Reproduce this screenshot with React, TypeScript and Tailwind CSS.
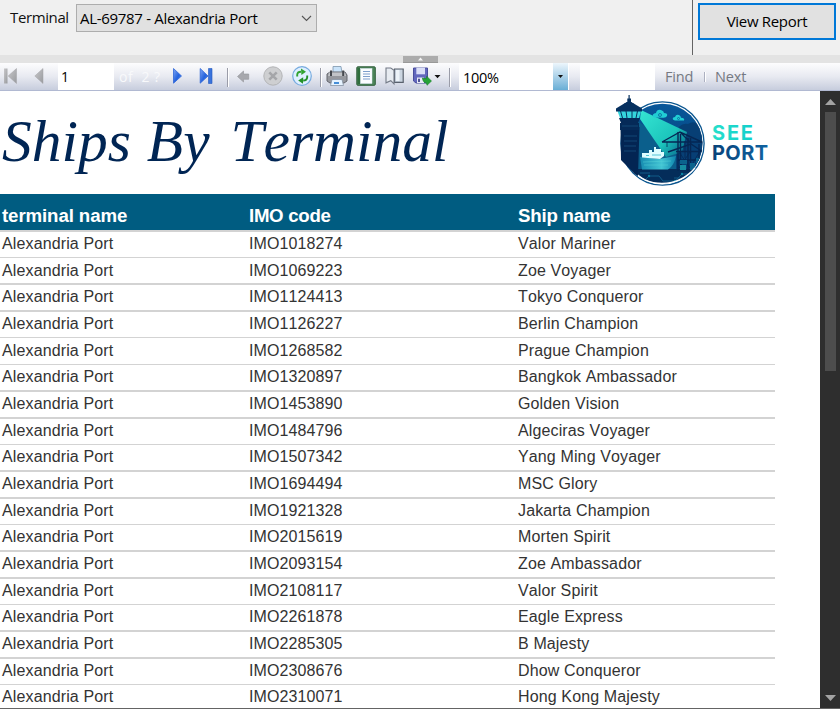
import React from "react";

type Ship = [code: string, name: string, rowClass: string];

const ships: Ship[] = [
  ["IMO1018274", "Valor Mariner", "h-[27px] border-t-2 pt-px"],
  ["IMO1069223", "Zoe Voyager", "h-[26px] border-t pt-[2px]"],
  ["IMO1124413", "Tokyo Conqueror", "h-[27px] border-t-2 pt-px"],
  ["IMO1126227", "Berlin Champion", "h-[27px] border-t-2 pt-px"],
  ["IMO1268582", "Prague Champion", "h-[27px] border-t pt-[2px]"],
  ["IMO1320897", "Bangkok Ambassador", "h-[26px] border-t pt-px"],
  ["IMO1453890", "Golden Vision", "h-[27px] border-t-2 pt-px"],
  ["IMO1484796", "Algeciras Voyager", "h-[27px] border-t-2 pt-px"],
  ["IMO1507342", "Yang Ming Voyager", "h-[26px] border-t pt-px"],
  ["IMO1694494", "MSC Glory", "h-[27px] border-t-2 pt-px"],
  ["IMO1921328", "Jakarta Champion", "h-[27px] border-t-2 pt-px"],
  ["IMO2015619", "Morten Spirit", "h-[26px] border-t pt-px"],
  ["IMO2093154", "Zoe Ambassador", "h-[27px] border-t-2 pt-px"],
  ["IMO2108117", "Valor Spirit", "h-[27px] border-t-2 pt-px"],
  ["IMO2261878", "Eagle Express", "h-[26px] border-t pt-px"],
  ["IMO2285305", "B Majesty", "h-[27px] border-t-2 pt-px"],
  ["IMO2308676", "Dhow Conqueror", "h-[27px] border-t-2 pt-px"],
  ["IMO2310071", "Hong Kong Majesty", "h-[24px] border-t pt-px"],
];

const ui = "font-['Open_Sans','Noto_Sans',sans-serif] whitespace-nowrap";

function Separator() {
  return <div className="mt-[5px] h-[19px] w-[2px] shrink-0 border-l border-[#9a9ca8] bg-white" />;
}

function Parameters() {
  return (
    <header className="flex h-[55px] bg-[#f0f0f0]">
      <div className="flex w-[692px] items-start pl-[10px]">
        <label className={`${ui} mt-[6px] w-[66px] text-[15px] leading-[22px] tracking-[-0.38px] text-[#111]`}>
          Terminal
        </label>
        <div className="mt-[4px] flex h-[28px] w-[241px] items-center justify-between border border-[#adadad] bg-[#e1e1e1] pr-[4px] pl-[3px]">
          <span className={`${ui} text-[15px] leading-[22px] tracking-[-0.31px] text-black`}>AL-69787 - Alexandria Port</span>
          <svg width="11" height="7" viewBox="0 0 11 7" fill="none">
            <path d="M1 1L5.5 5.5L10 1" stroke="#555" strokeWidth="1.1" />
          </svg>
        </div>
      </div>
      <div className="flex flex-1 border-l border-[#646464] pt-[3px] pl-[5px]">
        <button className={`${ui} h-[37px] w-[138px] border-2 border-[#0078d7] bg-[#e1e1e1] pb-[2px] text-[15px] leading-[22px] tracking-[-0.32px] text-black`}>
          View Report
        </button>
      </div>
    </header>
  );
}

function Splitter() {
  return (
    <div className="flex h-[8px] items-end bg-[#e3e3e3] pl-[403px]">
      <div className="flex h-[7px] w-[35px] items-center justify-center border-b border-[#999] bg-[#acacac]">
        <svg width="7" height="4" viewBox="0 0 7 4"><path d="M3.5 0.5L6 3.5H1Z" fill="#f6f6f6" /></svg>
      </div>
    </div>
  );
}

function Defs() {
  return (
    <defs>
      <linearGradient id="blueArrow" x1="0" y1="0" x2="1" y2="1">
        <stop stopColor="#7fa6f5" /><stop offset=".55" stopColor="#2563dd" /><stop offset="1" stopColor="#5590f0" />
      </linearGradient>
      <linearGradient id="greyArrow" x1="0" y1="0" x2="1" y2="1">
        <stop stopColor="#c8c8ca" /><stop offset="1" stopColor="#989a9e" />
      </linearGradient>
    </defs>
  );
}

function PageBackIcons() {
  return (
    <svg className="shrink-0" width="58" height="27" viewBox="0 0 58 27">
      <Defs />
      <path d="M4 5.5H7.5V20.5H4Z" fill="url(#greyArrow)" />
      <path d="M16.5 5.5V20.5L8.2 13Z" fill="url(#greyArrow)" stroke="#a3a3a7" strokeWidth=".5" />
      <path d="M43 5.5V20.5L34.8 13Z" fill="url(#greyArrow)" stroke="#a3a3a7" strokeWidth=".5" />
    </svg>
  );
}

function PageForwardIcons() {
  return (
    <svg className="shrink-0" width="57" height="27" viewBox="0 0 57 27">
      <path d="M3.5 5.5V20.2L11.5 13Z" fill="url(#blueArrow)" stroke="#2e66d8" strokeWidth=".8" />
      <path d="M30.2 5.5V20.2L38 13Z" fill="url(#blueArrow)" stroke="#2e66d8" strokeWidth=".8" />
      <path d="M38.5 5.5H42V20.5H38.5Z" fill="#3973dc" stroke="#2357bd" strokeWidth=".6" />
    </svg>
  );
}

function HistoryIcons() {
  return (
    <svg className="shrink-0" width="91" height="27" viewBox="229 0 91 27">
      <path d="M237.5 13.5L243.5 8V11H248.7V16.3H243.5V19Z" fill="#a7a8ad" stroke="#929399" strokeWidth=".6" />
      <circle cx="273" cy="13" r="9.2" fill="#cecfd1" stroke="#b3b4b6" />
      <path d="M269.3 9.3L276.7 16.7M276.7 9.3L269.3 16.7" stroke="#a5a6a9" strokeWidth="2.6" />
      <circle cx="302" cy="13" r="9.3" fill="#deefff" stroke="#77abdf" strokeWidth="1.2" />
      <path d="M297.2 13.6V12Q297.2 8.7 301 8.7" fill="none" stroke="#32a331" strokeWidth="1.9" />
      <path d="M301 5.4L306 8.7L301.4 12Z" fill="#32a331" />
      <path d="M307.2 12.5V14.2Q307 17.5 303.2 17.5" fill="none" stroke="#249128" strokeWidth="1.9" />
      <path d="M303.2 14.2L298.2 17.5L303 20.8Z" fill="#249128" />
    </svg>
  );
}

function DocumentIcons() {
  return (
    <svg className="shrink-0" width="127" height="27" viewBox="322 0 127 27">
      <path d="M333 10V3.5H341L342 10Z" fill="#c9e3fa" stroke="#7e95ac" strokeWidth=".8" />
      <path d="M330 9H345L347 12V18L344 20H330L327 18V11Z" fill="#96989e" stroke="#64666d" />
      <path d="M329 9.5H345L346 13H328Z" fill="#c2c4c8" />
      <path d="M331 7.5V13M343.2 7.5V13" stroke="#45484e" strokeWidth="2" />
      <path d="M332 16.5H342L343.5 22.5H330.5Z" fill="#e6f3ff" stroke="#8793a3" strokeWidth=".8" />
      <path d="M334 20H339" stroke="#3483d3" strokeWidth="1.8" />

      <rect x="356.8" y="3.8" width="18.5" height="18.5" rx="1" fill="#4d8559" stroke="#315f3c" />
      <path d="M357.5 5H360V21H357.5Z" fill="#2f6e3d" />
      <rect x="360.5" y="5.5" width="11.5" height="15" fill="#fbfdff" stroke="#d9e5f3" strokeWidth=".5" />
      <path d="M363 8.5H370M363 11H370M363 13.5H370M363 16H370" stroke="#7d9fcb" strokeWidth="1" />

      <path d="M394.5 6H403.2V19.3H394.5Z" fill="#cbd5e1" stroke="#59616d" strokeWidth="1.2" />
      <path d="M396 7H399.5V18H396Z" fill="#edf3f9" />
      <path d="M386 5H390.8L394 7.2V21L390.8 17.7L386 19.8Z" fill="#e7ebf1" stroke="#747b87" strokeWidth="1.1" />

      <path d="M413.5 5H427.5V20H416L413.5 18Z" fill="#6267bd" stroke="#494d9c" />
      <path d="M416.3 4.7H425V11.3H416.3Z" fill="#dadef7" />
      <path d="M417 14.5H424V20H417Z" fill="#e8ebf6" />
      <path d="M418 15.8H420V19H418Z" fill="#515497" />
      <path d="M422.4 15L426.4 15.8L426.6 13.2L431.5 18L427 22.3L426.5 20Q423 19.8 422.4 15Z" fill="#26a337" stroke="#168126" strokeWidth=".6" />
      <path d="M434.5 12H440.5L437.5 15.2Z" fill="#111" />
    </svg>
  );
}

function Toolbar() {
  return (
    <nav className={`${ui} flex h-[28px] border-b border-[#b1b9d2] bg-gradient-to-b from-[#fdfdfe] via-[#e8eaf1] to-[#c7cddd]`}>
      <PageBackIcons />
      <div className="h-[27px] w-[56px] shrink-0 bg-white pt-[3px] pl-[3px] text-[14px] leading-[22px] text-black">1</div>
      <div className="w-[56px] shrink-0 pt-[3px] pl-[5px] text-[14px] leading-[22px] tracking-[0.5px] whitespace-pre text-[#f8f9fb]">of  2 ?</div>
      <PageForwardIcons />
      <Separator />
      <HistoryIcons />
      <Separator />
      <DocumentIcons />
      <Separator />
      <div className="ml-[8px] flex h-[27px] w-[110px] shrink-0 bg-white">
        <span className="w-[94px] pt-[4px] pl-[4px] text-[14.5px] leading-[22px] tracking-[-0.3px] text-black">100%</span>
        <div className="flex w-[15px] items-center justify-center bg-gradient-to-b from-[#edf6fc] to-[#68aed5]">
          <svg width="5" height="3" viewBox="0 0 5 3"><path d="M0 0H5L2.5 3Z" fill="#111" /></svg>
        </div>
      </div>
      <div className="ml-[11px] h-[27px] w-[75px] shrink-0 bg-white" />
      <span className="w-[49px] shrink-0 pt-[3px] pl-[10px] text-[14.5px] leading-[22px] tracking-[-0.2px] text-[#757982]">Find</span>
      <div className="mt-[9px] h-[10px] w-[2px] border-l border-[#acb0c0] bg-white" />
      <span className="pt-[3px] pl-[9px] text-[14.5px] leading-[22px] tracking-[-0.15px] text-[#757982]">Next</span>
    </nav>
  );
}

function Logo() {
  return (
    <svg className="shrink-0" width="165" height="98" viewBox="610 93 165 98">
      <defs>
        <linearGradient id="sea" x1="0" y1="0" x2="0" y2="1"><stop stopColor="#09579a" /><stop offset="1" stopColor="#023c73" /></linearGradient>
        <linearGradient id="beam" x1="0" y1="0" x2="1" y2="1"><stop stopColor="#35e6d3" /><stop offset=".6" stopColor="#1cc5bc" /><stop offset="1" stopColor="#087c96" stopOpacity=".5" /></linearGradient>
        <linearGradient id="hull" x1="0" y1="0" x2="1" y2="0"><stop stopColor="#168bb0" /><stop offset=".6" stopColor="#43c5d4" /><stop offset="1" stopColor="#0e86ae" /></linearGradient>
        <linearGradient id="seeText"><stop stopColor="#26dfcb" /><stop offset="1" stopColor="#12cfcc" /></linearGradient>
        <linearGradient id="portText"><stop stopColor="#074279" /><stop offset="1" stopColor="#1063a1" /></linearGradient>
        <clipPath id="harbour"><circle cx="662.5" cy="143.5" r="40" /></clipPath>
      </defs>
      <circle cx="662.5" cy="143.5" r="41.6" fill="white" stroke="#09558f" strokeWidth="1.3" />
      <circle cx="662.5" cy="143.5" r="39.8" fill="url(#sea)" />
      <g clipPath="url(#harbour)">
        <path d="M676 134Q679 122 688 124Q697 118 704 133V171H674Z" fill="#073f75" />
        <path d="M638 121V171H676V150Z" fill="#0b5f8c" />
        <path d="M640 119L641 110L687 132L682 152L666 157Z" fill="url(#beam)" />
        <path d="M620 169H705V187H620Z" fill="#042d5a" />
        <path d="M640 157L659 159L676 156Q674 166 668 169.5H642Z" fill="url(#hull)" />
        <path d="M643 162L671 161M644 165L668 165" stroke="#56d3d7" strokeWidth=".5" />
        <path d="M642 157.5V153H649V150H652V152H654V147H656V149H661V152H664V156L660 159Z" fill="#dcfdff" />
        <path d="M652 155H661M646 155.5H649" stroke="#54c5d5" strokeWidth="1" />
        <g stroke="#052754" fill="none">
          <path d="M678 171V132M680.5 171V134M688 171V138M690.5 171V138M699 171V144" strokeWidth="1.4" />
          <path d="M662 142L680 132L702 142M680 132L690 142M662 142H703M668 152L691 144L703 152M676 151.5H704M678 160H704" strokeWidth="1.4" />
          <path d="M667 142V147M685 141V158M679 168L690 152M690 168L700 151M679 152L690 168" strokeWidth=".8" />
        </g>
        <path d="M680 160H687V164H680ZM690 163H695V170H690ZM696 158H702V163H696Z" fill="#0b638d" />
        <path d="M680 165H686V170H680ZM696 165H702V170H696Z" fill="#168da1" />
        <path d="M626 180H645L649 176H659L663 181H675L682 174H698M640 173H650M655 184H666M674 178H680" stroke="#105d88" strokeWidth="1" fill="none" />
        <g fill="#0a86a4"><circle cx="649" cy="176" r="1.2" /><circle cx="675" cy="181" r="1.2" /><circle cx="682" cy="174" r="1.2" /></g>
      </g>
      <path d="M632.5 170Q644 183.5 662 183.5Q682 183 695 168" fill="none" stroke="white" strokeWidth="1.3" />
      <path d="M620.5 127H639.5L638 176Q634 174 631 170L621 160Z" fill="#032553" />
      <path d="M619 118H640L638 123H639V130H620V123H621Z" fill="#052a58" />
      <path d="M622 126H638M624 136H637M624 141H637M624 146H636M624 151H636" stroke="#154b78" strokeWidth=".9" />
      <path d="M617.5 111H641L639 118H620Z" fill="#35d4dc" />
      <path d="M620.5 111L622.5 118M626 111L627 118M632 111V118M637.5 111L636 118" stroke="#06315d" strokeWidth="1" />
      <path d="M616 108.5L625 103H633L642 108.5V111.5H616Z" fill="#06305f" />
      <path d="M624 104Q629 98.5 634 104ZM628.5 95H629.7V102H628.5ZM627.3 98.5H631V102H627.3Z" fill="#06305f" />
      <g fill="#21cdd4">
        <path d="M655 117.5Q652 117 653 114.5Q654 113 656 113Q657 109 661 110Q664 111 664 113Q668 113 667 116Q666 118 663 117.7Z" />
        <path d="M675 120.5Q672 120 673 117.8Q674 117 675 117Q676 114 679 115Q681 116 681 117.7Q685 118 684 120.5Z" />
      </g>
      <g fill="none" stroke="#08679a" strokeWidth=".8"><circle cx="660" cy="115" r="1.5" /><circle cx="678.5" cy="118.5" r="1" /></g>
      <text x="712" y="140" fill="url(#seeText)" fontFamily="Inter, sans-serif" fontWeight="700" fontSize="20" textLength="41">SEE</text>
      <text x="712" y="160" fill="url(#portText)" fontFamily="Inter, sans-serif" fontWeight="700" fontSize="20" textLength="56">PORT</text>
    </svg>
  );
}

function Scrollbar() {
  return (
    <aside className="flex w-[20px] shrink-0 flex-col bg-[#2e2e2e] pl-[5px]">
      <svg width="11" height="21" viewBox="0 0 11 21"><path d="M0 14L5.5 8L11 14Z" fill="#a3a3a3" /></svg>
      <div className="h-[259px] w-[11px] bg-[#4d4d4d]" />
      <svg className="mt-auto mb-[7px]" width="11" height="6" viewBox="0 0 11 6"><path d="M0 0H11L5.5 6Z" fill="#a3a3a3" /></svg>
    </aside>
  );
}

function Report() {
  return (
    <section className="w-[775px] font-['Liberation_Sans',Arial,sans-serif] whitespace-nowrap">
      <div className="flex h-[103px] justify-between">
        <h1 className="pt-[20px] pl-[2px] font-['Liberation_Serif','Times_New_Roman',serif] text-[59.5px] leading-[60px] text-[#002554] italic [font-kerning:none] [word-spacing:1px]">
          Ships By <span className="ml-[5px]">Terminal</span>
        </h1>
        <div className="pt-[2px]"><Logo /></div>
      </div>
      <div className="grid h-[36px] grid-cols-[247px_269px_1fr] bg-[#005c81] pt-[11px] pl-[2px] text-[18.67px] leading-[22px] font-bold tracking-[-0.15px] text-white">
        <span className="tracking-[-0.1px]">terminal name</span><span className="tracking-[-0.3px]">IMO code</span><span className="tracking-[-0.2px]">Ship name</span>
      </div>
      <div className="text-[16px] leading-[22px] tracking-[0.13px] text-[#333] [font-kerning:none]">
        {ships.map(([code, name, rowClass]) => (
          <div key={code} className={`grid grid-cols-[247px_269px_1fr] border-[#d3d3d3] pl-[2px] ${rowClass}`}>
            <span className="h-[22px]">Alexandria Port</span><span className="h-[22px] tracking-[0.09px]">{code}</span><span className="h-[22px]">{name}</span>
          </div>
        ))}
      </div>
    </section>
  );
}

export default function App() {
  return (
    <div className="flex h-[709px] w-[840px] flex-col overflow-hidden border-b border-[#646464] bg-white">
      <Parameters />
      <Splitter />
      <Toolbar />
      <main className="flex min-h-0 flex-1 justify-between">
        <Report />
        <Scrollbar />
      </main>
    </div>
  );
}
